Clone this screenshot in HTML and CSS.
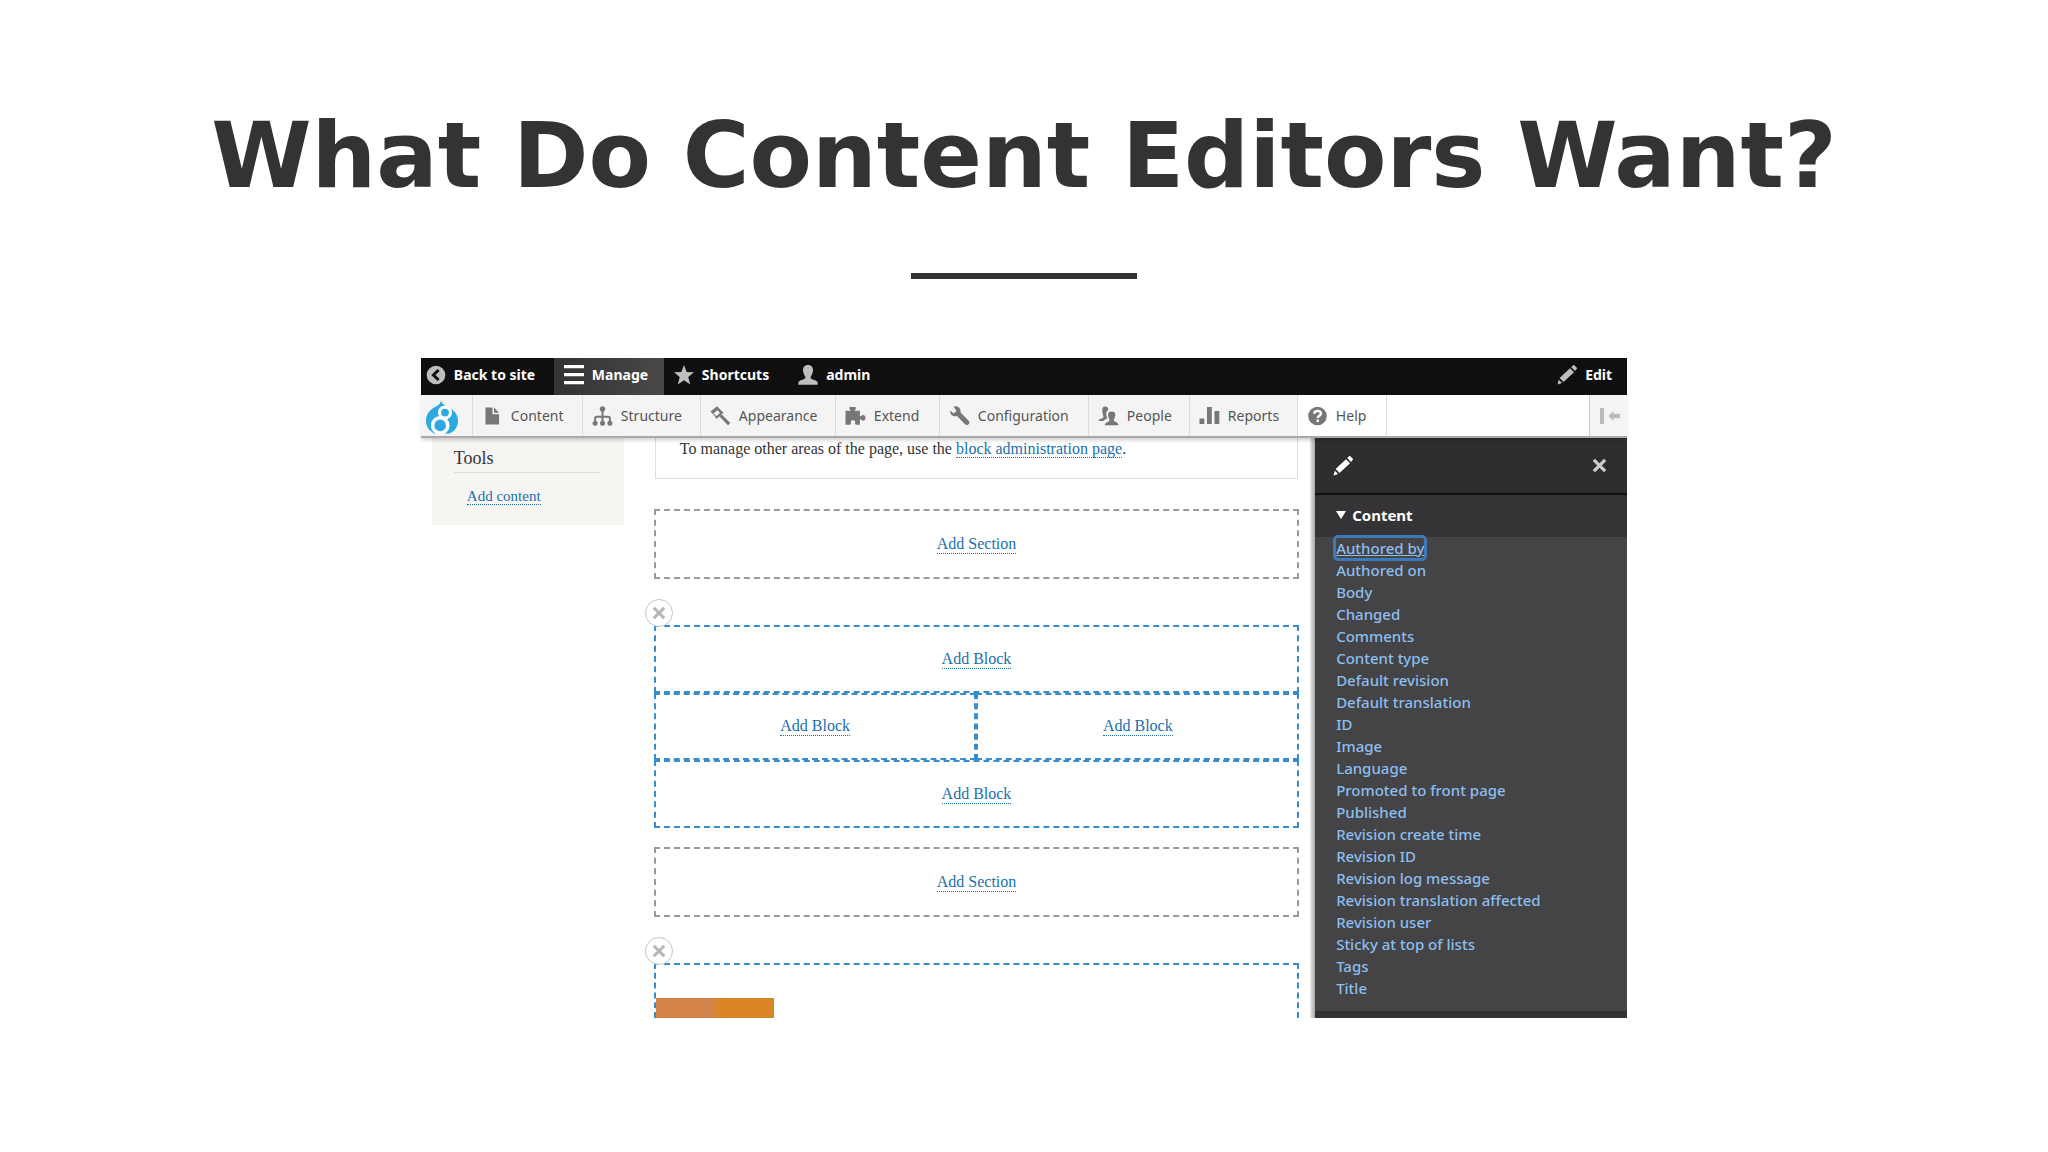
FILE: index.html
```
<!DOCTYPE html>
<html lang="en">
<head>
  <meta charset="UTF-8">
  <meta name="viewport" content="width=device-width, initial-scale=1.0">
  <title>What Do Content Editors Want?</title>
  <link rel="stylesheet" href="styles.css">
</head>
<body>
  <main class="slide">
    <h1 class="title">What Do Content Editors Want?</h1>
    <hr class="rule">

    <div class="app">
      <nav class="bar" aria-label="Toolbar">
        <a href="#" class="bar-item back">
          <svg viewBox="0 0 20 20"><circle cx="10" cy="10" r="9.3" fill="#bebebe"/><path d="M12.6 5 7.4 10l5.2 5" fill="none" stroke="#0f0f0f" stroke-width="3"/></svg>
          Back to site
        </a>
        <button class="bar-item active">
          <svg viewBox="0 0 20 20"><path d="M0 1.6h20M0 9.6h20M0 17.6h20" stroke="#fff" stroke-width="3.4" stroke-linecap="round"/></svg>
          Manage
        </button>
        <button class="bar-item">
          <svg viewBox="0 0 20 20"><path d="m10 0 2.7 6.9 7.3.4-5.7 4.7 1.9 7.4L10 15.3l-6.2 4.1L5.7 12 0 7.3l7.3-.4z" fill="#bebebe"/></svg>
          Shortcuts
        </button>
        <button class="bar-item user">
          <svg viewBox="0 0 20 20"><path d="M10 0c3.600 0 5.200 2.300 5 5.600-.2 2.500-1.100 4.400-2.200 5.900-.5.900-.2 2 .8 2.500 2.200 1 5.600 1.400 6 3.500l.2 2.200H.2l.2-2.200c.4-2.100 3.800-2.500 6-3.500 1-.5 1.300-1.600.8-2.500C6.100 10 5.200 8.100 5 5.600 4.800 2.300 6.400 0 10 0z" fill="#bebebe"/></svg>
          admin
        </button>
        <button class="bar-item edit">
          <svg viewBox="0 0 20 20"><path d="m13 3.200 4 4L6.600 17.100l-4-4zM14.200 2l1.700-1.600c.5-.5 1.100-.5 1.600 0L19.600 2.500c.5.5.5 1.100 0 1.600L18 5.900zM1.800 14.800l3.300 3.300L.5 19.600z" fill="#bebebe"/></svg>
          Edit
        </button>
      </nav>

      <nav class="tray" aria-label="Administration">
        <a href="#" class="logo" aria-label="Drupal">
          <svg viewBox="0 0 32 34"><path d="M15 0c.6 4.100 4 5.500 8 7.600 5 2.700 9 7 9 13.200 0 6-3.500 10.900-8.500 12.600H8.500C3.500 31.200 0 26.900 0 20.800 0 14.600 3.600 10 9 7.100 12.400 5.300 14.700 3.800 15 0z" fill="#2ba9e0"/><circle cx="19" cy="12.600" r="5.500" fill="none" stroke="#fff" stroke-width="3.200"/><circle cx="14.200" cy="25.400" r="7.600" fill="#2ba9e0" stroke="#fff" stroke-width="3.600"/></svg>
        </a>
        <a href="#" class="tray-item">
          <svg viewBox="0 0 20 20"><path d="M3 1.500h7v6.800h6.600v10.200H3zM11.500 1.500l5 5.200h-5z"/></svg>
          Content
        </a>
        <a href="#" class="tray-item">
          <svg viewBox="0 0 20 20"><circle cx="10" cy="3" r="2.700"/><path d="M10 3v14M2.600 17v-4.500q0-1.700 1.700-1.700h11.400q1.700 0 1.700 1.700V17" fill="none" stroke="currentColor" stroke-width="2"/><circle cx="2.600" cy="17.200" r="2.500"/><circle cx="10" cy="17.200" r="2.500"/><circle cx="17.400" cy="17.200" r="2.500"/></svg>
          Structure
        </a>
        <a href="#" class="tray-item">
          <svg viewBox="0 0 20 20"><path d="M0 5.600 6.500.3l5.800 5.900-6.300 6z"/><path d="m6.800 4.300 3.700 3.500L6.600 11 2.900 7.400z" fill="#f4f4f4"/><path d="m4.700 11.200 1.500 1.500L13 6.800l-1.600-1.600zM9 10.500l2.200-1.900 8.600 8.300-2.300 2.400z"/></svg>
          Appearance
        </a>
        <a href="#" class="tray-item">
          <svg viewBox="0 0 20 20"><path d="M4 1h6.200v2.300L8.800 4.800h5.600v5.400h1.400c.6-1.800 4.200-1.800 4.200 1.600s-3.600 3.400-4.200 1.600h-1.400v5.400h-4l-1.100-1.300c2.300-4.400-5.900-4.400-3.600 0l-1.100 1.300H0v-14h5.400L4 3.300z"/></svg>
          Extend
        </a>
        <a href="#" class="tray-item">
          <svg viewBox="0 0 20 20"><path d="M4.200.6c4-1.200 7.600 1.800 6.800 6l8.200 8.100c2.200 2.600-1.100 5.600-3.700 3.500L7.500 10C4.200 11.200.4 8.800.6 4.600l3.600 3L7 4.900z"/></svg>
          Configuration
        </a>
        <a href="#" class="tray-item">
          <svg viewBox="0 0 20 20"><path d="M6.500.500c2.400 0 3.500 1.400 3.300 3.500-2 1-2.600 4-1.500 6.700l.4 1.800c-1.500.8-3 1.100-3.700 2.600H.2c0-2.800 3.900-2.100 4.700-3.900.5-1.300-1-2.400-1-5.400C3.400 2.400 4.300.5 6.500.5z"/><path d="M13.200 5.500c2.800 0 3.800 1.600 3.600 3.900-.2 2.100-1.800 3.600-1.500 5 .7 1.700 4.700 1.500 4.700 4.900H6.300c0-3.400 4-3.200 4.700-4.900.3-1.400-1.300-2.900-1.500-5-.2-2.300.9-3.900 3.700-3.900z"/></svg>
          People
        </a>
        <a href="#" class="tray-item">
          <svg viewBox="0 0 20 20"><path d="M0 12.400h4.800V18H0zM7.500 1h4.800v17H7.500zM15 5h4.800v13H15z"/></svg>
          Reports
        </a>
        <a href="#" class="tray-item help">
          <svg viewBox="0 0 20 20"><circle cx="10" cy="10" r="9.300"/><path d="M6.800 7.800c.1-3.900 6.600-3.900 6.600-.3 0 2.300-3.100 2.300-3.200 4.500M10.200 13.500v2.400" fill="none" stroke="#fff" stroke-width="2.400"/></svg>
          Help
        </a>
        <button class="toggle" aria-label="Horizontal orientation">
          <svg viewBox="0 0 20 16"><path d="M0 0h4v16H0zM8.500 8l5-5v2.700H20v4.600h-6.500V13z"/></svg>
        </button>
      </nav>

      <div class="page">
        <aside class="tools">
          <h2>Tools</h2>
          <a href="#" class="link">Add content</a>
        </aside>

        <div class="layout">
          <p class="notice">To manage other areas of the page, use the <a href="#" class="link">block administration page</a>.</p>

          <div class="add-section"><a href="#" class="link">Add Section</a></div>

          <section class="section">
            <button class="remove" aria-label="Remove section"><svg viewBox="0 0 12 12"><path d="m1.500 1.500 9 9m0-9-9 9"/></svg></button>
            <div class="block wide"><a href="#" class="link">Add Block</a></div>
            <div class="block"><a href="#" class="link">Add Block</a></div>
            <div class="block"><a href="#" class="link">Add Block</a></div>
            <div class="block wide"><a href="#" class="link">Add Block</a></div>
          </section>

          <div class="add-section second"><a href="#" class="link">Add Section</a></div>

          <section class="section">
            <button class="remove" aria-label="Remove section"><svg viewBox="0 0 12 12"><path d="m1.500 1.500 9 9m0-9-9 9"/></svg></button>
            <div class="block wide cut"><div class="picture"></div></div>
          </section>
        </div>

        <aside class="panel">
          <header class="panel-head">
            <svg class="pencil" viewBox="0 0 20 20"><path d="m13 3.200 4 4L6.600 17.100l-4-4zM14.200 2l1.700-1.600c.5-.5 1.100-.5 1.600 0L19.600 2.500c.5.5.5 1.100 0 1.600L18 5.900zM1.800 14.800l3.300 3.300L.5 19.600z" fill="#fff"/></svg>
            <button class="close" aria-label="Close"><svg viewBox="0 0 12 12"><path d="m1.500 1.500 9 9m0-9-9 9"/></svg></button>
          </header>
          <details open>
            <summary><svg viewBox="0 0 10 8"><path d="M0 0h10L5 8z" fill="#fff"/></svg>Content</summary>
            <ul class="fields">
              <li><a href="#" class="focused">Authored by</a></li>
              <li><a href="#">Authored on</a></li>
              <li><a href="#">Body</a></li>
              <li><a href="#">Changed</a></li>
              <li><a href="#">Comments</a></li>
              <li><a href="#">Content type</a></li>
              <li><a href="#">Default revision</a></li>
              <li><a href="#">Default translation</a></li>
              <li><a href="#">ID</a></li>
              <li><a href="#">Image</a></li>
              <li><a href="#">Language</a></li>
              <li><a href="#">Promoted to front page</a></li>
              <li><a href="#">Published</a></li>
              <li><a href="#">Revision create time</a></li>
              <li><a href="#">Revision ID</a></li>
              <li><a href="#">Revision log message</a></li>
              <li><a href="#">Revision translation affected</a></li>
              <li><a href="#">Revision user</a></li>
              <li><a href="#">Sticky at top of lists</a></li>
              <li><a href="#">Tags</a></li>
              <li><a href="#">Title</a></li>
            </ul>
          </details>
        </aside>
      </div>
    </div>
  </main>
</body>
</html>
```
FILE: styles.css
```
* { box-sizing: border-box; }
body { margin: 0; background: #fff; color: #333; font-family: "Noto Sans", "Open Sans", sans-serif; }
button { border: 0; padding: 0; background: none; font: inherit; color: inherit; cursor: pointer; }
a { text-decoration: none; color: inherit; }
svg { display: block; flex: none; }

.slide { display: flex; flex-direction: column; align-items: center; padding: 96px 0 40px; }
.title { margin: 0; font-family: "DejaVu Sans", sans-serif; font-size: 91px; line-height: 120px; font-weight: 700; color: #333; text-align: center; }
.rule { width: 226px; height: 6px; margin: 57px 0 79px; border: 0; background: #333; }
.app { width: 58.9%; min-width: 1206px; }

/* black toolbar */
.bar { display: flex; height: 37px; padding-left: 5px; background: #0f0f0f; color: #fff; font-size: 14px; font-weight: 700; }
.bar-item { display: flex; align-items: center; gap: 8px; padding: 0 9px 4px 10px; }
.bar-item svg { width: 20px; height: 20px; }
.bar-item.back { padding-left: 0; width: 128px; }
.bar-item.active { width: 110px; background: linear-gradient(90deg, #333, #484848); }
.bar-item.user { margin-left: 10px; }
.bar-item.edit { margin-left: auto; padding-right: 15px; }

/* admin menu */
.tray {
  display: grid; grid-template-columns: 52px 110px 118px 135px 104px 149px 101px 108px 89px 1fr 38px;
  height: 43px; background: #fff; border-bottom: 2px solid #a9a9a9; position: relative; z-index: 2;
  box-shadow: 0 3px 4px -1px #0003; font-size: 14px; color: #555;
}
.logo, .tray-item { display: flex; align-items: center; background: #f4f4f4; border-right: 1px solid #ddd; }
.logo { padding: 3px 0 0 5px; }
.logo svg { width: 32px; height: 34px; }
.tray-item { gap: 8px; padding-left: 9px; }
.tray-item svg { width: 21px; height: 20px; fill: #777; color: #777; }
.tray-item.help { background: #fff; }
.toggle { grid-column: 11; display: flex; align-items: center; padding-left: 10px; background: #f4f4f4; border-left: 1px solid #ccc; }
.toggle svg { width: 20px; height: 16px; fill: #bbb; }

/* page below the menus */
.page { display: grid; grid-template-columns: 203px 1fr 317px; align-items: start; }
.link { color: #1a6fae; border-bottom: 1px dotted #1a6fae; line-height: 18px; }
.tools { margin-left: 11px; height: 87px; padding: 10px 23px 0 22px; background: #f6f5f2; font: 15px/18px "Liberation Serif", serif; }
.tools h2 { margin: 0 0 14px; height: 25px; border-bottom: 1px solid #ddd; font-size: 18px; line-height: 20px; font-weight: 400; color: #333; }
.tools .link { margin-left: 13px; }

.layout { margin: 0 11px 0 30px; font: 16px/18px "Liberation Serif", serif; }
.notice { height: 41px; margin: 0 1px 30px; padding: 2px 24px; border: 1px solid #ddd; border-top: 0; color: #333; }
.add-section { display: flex; align-items: center; justify-content: center; height: 70px; border: 2px dashed #999; }
.add-section.second { margin-top: 19px; }
.add-section + .section { margin-top: 46px; }
.section { display: grid; grid-template-columns: 1fr 1fr; position: relative; }
.block { display: flex; align-items: center; justify-content: center; height: 67px; border: 2px dashed #388ccc; }
.block.wide { grid-column: 1 / 3; height: 68px; }
.block.cut { height: 55px; border-bottom: 0; justify-content: flex-start; align-items: flex-end; }
.remove {
  position: absolute; left: -9px; top: -26px; width: 28px; height: 28px; border: 1px solid #c8c4c8; border-radius: 50%; background: #fff;
  display: flex; align-items: center; justify-content: center;
}
.remove svg { width: 14px; height: 14px; }
.remove path { stroke: #b5b5b5; stroke-width: 2.6; }
.picture { width: 118px; height: 20px; background: linear-gradient(90deg, #d2844b 50%, #d98627 50%); }

/* off-canvas panel */
.panel { position: relative; align-self: stretch; margin-left: 5px; border-bottom: 7px solid #333133; background: #444345; color: #fff; }
.panel::before { content: ""; position: absolute; left: -5px; top: 0; bottom: -7px; width: 5px; background: linear-gradient(90deg, #e8e8e8, #a8a8a8); }
.panel-head { display: flex; align-items: center; justify-content: space-between; height: 57px; padding: 0 20px 0 18px; border-bottom: 2px solid #111; background: #2f2d2f; }
.panel-head .pencil { width: 20px; height: 20px; }
.close svg { width: 15px; height: 15px; }
.close path { stroke: #ccc; stroke-width: 2.6; }
.panel summary { display: flex; align-items: center; gap: 6px; height: 42px; padding: 0 0 2px 21px; background: #353336; font-size: 15px; font-weight: 700; list-style: none; }
.panel summary svg { width: 10px; height: 8px; }
.fields { margin: 0; padding: 0 0 11px 21px; list-style: none; font-size: 15px; font-weight: 500; line-height: 22px; color: #8cbeef; }
.fields li { height: 22px; }
.focused { text-decoration: underline; outline: 3px solid #3d7ab9; border-radius: 2px; }
```
